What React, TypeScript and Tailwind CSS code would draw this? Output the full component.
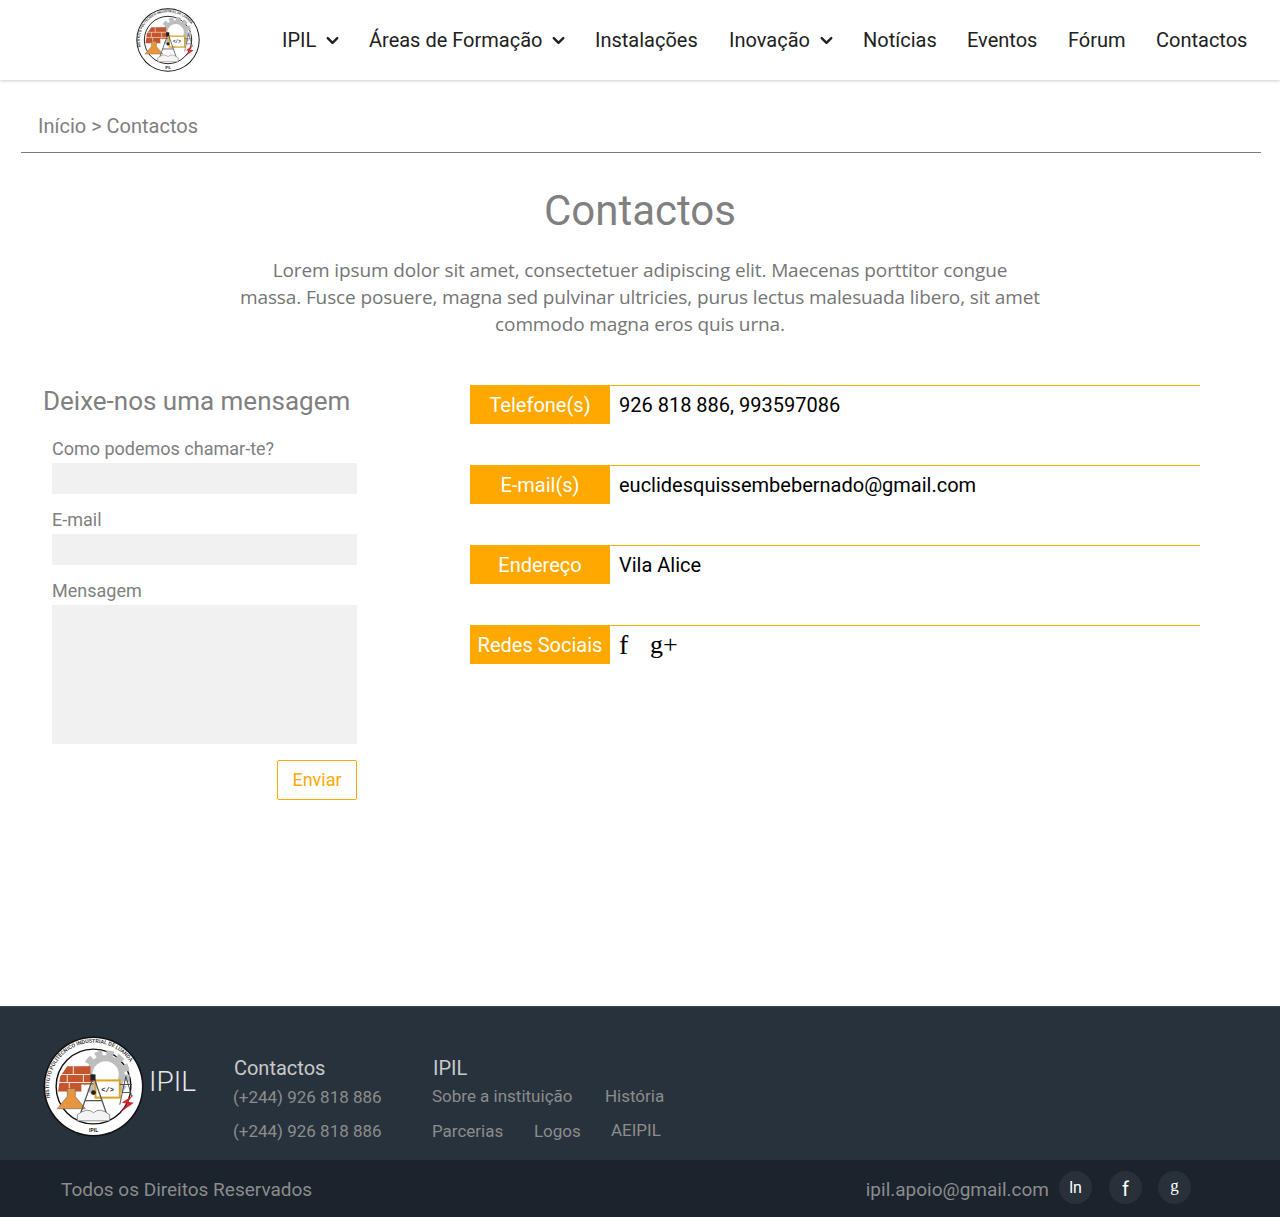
import { ChevronDown } from "lucide-react";

const roboto = { fontFamily: "Roboto, sans-serif" };

function Logo({ size, dark }: { size: number; dark?: boolean }) {
  return (
    <svg width={size} height={size} viewBox="0 0 100 100" className="shrink-0">
      <circle cx="50" cy="50" r="49.5" fill="#111" />
      <circle cx="50" cy="50" r="48" fill="#fff" />
      <circle cx="50" cy="50" r="37" fill="#fff" stroke="#111" strokeWidth="1.4" />
      {/* gear */}
      <circle cx="62" cy="38" r="21" fill="none" stroke="#bdbdbd" strokeWidth="6" strokeDasharray="7 4" />
      <circle cx="62" cy="38" r="16" fill="none" stroke="#bdbdbd" strokeWidth="6" />
      {/* bricks */}
      <path d="M17 40 L24 30 L47 30 L47 38 L50 38 L50 48 L38 48 L38 55 L15 55 Z" fill="#c4552d" />
      <path d="M17 38 H47 M14 46 H50 M30 30 V38 M40 38 V46 M26 46 V55 M24 38 V46" stroke="#f3e4da" strokeWidth="1" fill="none" />
      {/* flask */}
      <path d="M24 52 H32 V60 L42 72 H14 L24 60 Z" fill="#e8963e" stroke="#666" strokeWidth="0.6" />
      {/* screen */}
      <rect x="52" y="44" width="24" height="17" fill="#fff" stroke="#d9a520" strokeWidth="2" />
      <text x="64" y="55" textAnchor="middle" fontSize="7" fontWeight="700" fill="#222" fontFamily="Liberation Mono, monospace">
        {"</>"}
      </text>
      {/* compass */}
      <path d="M50 40 L36 80 M50 40 L64 80 M42 64 H58" stroke="#555" strokeWidth="1.3" fill="none" />
      <rect x="47" y="38" width="5" height="6" fill="#222" />
      <circle cx="50" cy="56" r="2.4" fill="#222" />
      {/* pylon + bolt */}
      <path d="M82 40 L76 68 M82 40 L88 60 M76 48 H88 M78 56 H87" stroke="#444" strokeWidth="0.9" fill="none" />
      <path d="M90 58 L78 66 L84 67 L76 76 L90 66 L84 65 Z" fill="#d8232a" />
      {/* book */}
      <path d="M34 78 Q44 70 50 76 Q56 70 66 78 V84 H34 Z" fill="#f4f4f4" stroke="#666" strokeWidth="0.7" />
      <text x="50" y="95" textAnchor="middle" fontSize="5" fontWeight="700" fill="#222" fontFamily="Roboto, sans-serif">
        IPIL
      </text>
      <path id={dark ? "ring-d" : "ring-l"} d="M7.5 62 A44 44 0 1 1 92.5 62" fill="none" />
      <text fontSize="5.3" fontWeight="500" fill="#222" fontFamily="Roboto, sans-serif">
        <textPath href={dark ? "#ring-d" : "#ring-l"} startOffset="1">
          INSTITUTO POLITÉCNICO INDUSTRIAL DE LUANDA
        </textPath>
      </text>
    </svg>
  );
}

function NavLink({ label, caret, className }: { label: string; caret?: boolean; className: string }) {
  return (
    <a className={`flex items-center text-[20px] leading-none text-[#212121] ${className}`}>
      {label}
      {caret && <ChevronDown size={19} strokeWidth={3} className="ml-[7px] mt-px text-[#212121]" />}
    </a>
  );
}

function InfoRow({ label, children }: { label: string; children: React.ReactNode }) {
  return (
    <div className="flex h-[40px] border-t border-[#ffa800] mb-[40px]">
      <div className="w-[140px] h-[39px] -mt-px pt-px bg-[#ffa800] text-white text-[20px] flex items-center justify-center whitespace-nowrap">
        {label}
      </div>
      <div className="pl-[9px] text-[20px] text-black flex items-center h-[39px] pb-[1px]">{children}</div>
    </div>
  );
}

function Social({ children, className }: { children: string; className?: string }) {
  return (
    <span className={`w-[33px] h-[33px] rounded-full bg-[#283139] text-white flex items-center justify-center ${className}`}>
      {children}
    </span>
  );
}

export default function App() {
  return (
    <div className="min-h-[1217px] bg-white flex flex-col" style={roboto}>
      {/* header */}
      <header className="h-[80px] flex items-center shadow-[0_1px_3px_rgba(0,0,0,0.2)] relative">
        <div className="ml-[136px]">
          <Logo size={64} />
        </div>
        <nav className="flex items-center ml-[82px]">
          <NavLink label="IPIL" caret className="w-[87px]" />
          <NavLink label="Áreas de Formação" caret className="w-[226px]" />
          <NavLink label="Instalações" className="w-[134px]" />
          <NavLink label="Inovação" caret className="w-[134px]" />
          <NavLink label="Notícias" className="w-[104px]" />
          <NavLink label="Eventos" className="w-[101px]" />
          <NavLink label="Fórum" className="w-[88px]" />
          <NavLink label="Contactos" className="" />
        </nav>
      </header>

      {/* breadcrumb */}
      <div className="ml-[21px] mr-[19px] h-[73px] pt-[34px] pl-[17px] border-b border-[#7b7b7b] text-[20px] leading-[24px] text-[#808080]">
        Início &gt; Contactos
      </div>

      <main className="flex-1">
        <h1 className="mt-[33px] text-center text-[42px] leading-[50px] text-[#808080]">Contactos</h1>
        <p
          className="mt-[21px] text-center text-[19px] leading-[27px] tracking-[-0.12px] text-[#757575] whitespace-nowrap"
          style={{ fontFamily: "'Open Sans', sans-serif" }}
        >
          Lorem ipsum dolor sit amet, consectetuer adipiscing elit. Maecenas porttitor congue
          <br />
          massa. Fusce posuere, magna sed pulvinar ultricies, purus lectus malesuada libero, sit amet
          <br />
          commodo magna eros quis urna.
        </p>

        <div className="flex mt-[47px]">
          {/* form */}
          <section className="w-[470px] pl-[43px]">
            <h2 className="text-[26px] leading-[32px] text-[#808080]">Deixe-nos uma mensagem</h2>
            <form className="ml-[9px] w-[305px] mt-[21px] text-[18px] text-[#808080]">
              <label className="block leading-[22px]">Como podemos chamar-te?</label>
              <div className="h-[31px] mt-[3px] bg-[#f1f1f1]" />
              <label className="block mt-[15px] leading-[22px]">E-mail</label>
              <div className="h-[31px] mt-[3px] bg-[#f1f1f1]" />
              <label className="block mt-[15px] leading-[22px]">Mensagem</label>
              <div className="h-[139px] mt-[3px] bg-[#f1f1f1]" />
              <div className="flex justify-end mt-[16px]">
                <button type="button" className="w-[80px] h-[40px] pb-[2px] border border-[#ffa800] rounded-[2px] text-[#ffa800] text-[18px]">
                  Enviar
                </button>
              </div>
            </form>
          </section>

          {/* contact info */}
          <section className="w-[730px]">
            <InfoRow label="Telefone(s)">926 818 886, 993597086</InfoRow>
            <InfoRow label="E-mail(s)">euclidesquissembebernado@gmail.com</InfoRow>
            <InfoRow label="Endereço">Vila Alice</InfoRow>
            <InfoRow label="Redes Sociais">
              <span className="flex items-center" style={{ fontFamily: "'Liberation Serif', serif" }}>
                <span className="w-[31px] text-[28px] leading-none">f</span>
                <span className="text-[26px] leading-none">g+</span>
              </span>
            </InfoRow>
          </section>
        </div>
      </main>

      {/* footer */}
      <footer className="h-[154px] bg-[#28323d] border-t border-[#3a4450] flex">
        <div className="ml-[43px] mt-[29px] flex items-start">
          <Logo size={101} dark />
          <span className="ml-[5px] mt-[28px] text-[28px] leading-[36px] font-light text-[#e8e8e8]">IPIL</span>
        </div>
        <div className="ml-[37px] mt-[49px] w-[199px]">
          <h3 className="ml-px text-[20px] leading-[24px] text-[#c9c9c9]">Contactos</h3>
          <p className="mt-[6px] text-[17px] leading-[22px] text-[#8c8c8c]">(+244) 926 818 886</p>
          <p className="mt-[12px] text-[17px] leading-[22px] text-[#8c8c8c]">(+244) 926 818 886</p>
        </div>
        <div className="mt-[49px] text-[17px] text-[#8c8c8c]">
          <h3 className="ml-px text-[20px] leading-[24px] text-[#c9c9c9]">IPIL</h3>
          <div className="flex mt-[5px] leading-[22px]">
            <a className="w-[173px]">Sobre a instituição</a>
            <a>História</a>
          </div>
          <div className="flex mt-[13px] leading-[22px]">
            <a className="w-[102px]">Parcerias</a>
            <a className="w-[77px]">Logos</a>
            <a className="-mt-px">AEIPIL</a>
          </div>
        </div>
      </footer>
      <div className="h-[57px] bg-[#1b232c] flex items-center text-[19px] text-[#8c8c8c]">
        <span className="ml-[61px] mt-[3px]">Todos os Direitos Reservados</span>
        <span className="ml-auto mt-[3px]">ipil.apoio@gmail.com</span>
        <div className="flex ml-[10px] mr-[89px] -mt-[2px]">
          <Social className="text-[16px]">ln</Social>
          <Social className="ml-[17px] text-[20px] pt-[2px]">f</Social>
          <Social className="ml-[16px] text-[17px] pb-[3px] [font-family:'Liberation_Serif',serif]">g</Social>
        </div>
      </div>
    </div>
  );
}
